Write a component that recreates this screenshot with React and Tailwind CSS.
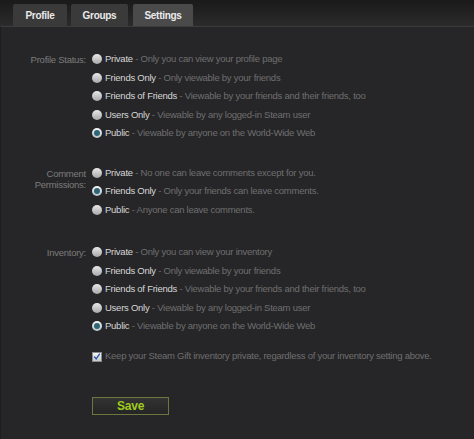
import React, { useState } from 'react';

const PRIVACY = [
    { key: 'private', label: 'Private', desc: 'Only you can view your profile page' },
    { key: 'friends', label: 'Friends Only', desc: 'Only viewable by your friends' },
    { key: 'fof', label: 'Friends of Friends', desc: 'Viewable by your friends and their friends, too' },
    { key: 'users', label: 'Users Only', desc: 'Viewable by any logged-in Steam user' },
    { key: 'public', label: 'Public', desc: 'Viewable by anyone on the World-Wide Web' },
];

const COMMENTS = [
    { key: 'private', label: 'Private', desc: 'No one can leave comments except for you.' },
    { key: 'friends', label: 'Friends Only', desc: 'Only your friends can leave comments.' },
    { key: 'public', label: 'Public', desc: 'Anyone can leave comments.' },
];

const INVENTORY = PRIVACY.map(o => o.key === 'private' ? { ...o, desc: 'Only you can view your inventory' } : o);

function Radio({ checked }) {
    return checked ? (
        <span className="w-[10px] h-[10px] rounded-full bg-gradient-to-b from-[#f4f4f4] to-[#b8c4c8] flex items-center justify-center shrink-0">
            <span className="w-[6px] h-[6px] rounded-full bg-[#2f6676]" />
        </span>
    ) : (
        <span className="w-[10px] h-[10px] rounded-full bg-gradient-to-b from-[#e8e8e8] to-[#a9a9a9] shrink-0" />
    );
}

function Group({ label, options, value, onChange }) {
    return (
        <div className="flex">
            <div className="w-[88px] pr-[3px] text-right text-[#7c7c7c] leading-[11px] pt-[4px]">{label}</div>
            <div className="flex flex-col">
                {options.map(o => (
                    <div key={o.key} onClick={() => onChange(o.key)} className="h-[18.5px] flex items-center gap-[3px] pl-[3px] cursor-pointer whitespace-nowrap">
                        <Radio checked={value === o.key} />
                        <span>
                            <span className="text-[#d6d6d6]">{o.label}</span>
                            <span className="text-[#6f6f6f]"> - {o.desc}</span>
                        </span>
                    </div>
                ))}
            </div>
        </div>
    );
}

export default function App() {
    const [profile, setProfile] = useState('public');
    const [comments, setComments] = useState('friends');
    const [inventory, setInventory] = useState('public');
    const [giftPrivate, setGiftPrivate] = useState(true);

    const tabs = ['Profile', 'Groups', 'Settings'];

    return (
        <div className="w-[474px] h-[439px] bg-[#262628] overflow-hidden text-[9.5px] tracking-[-0.25px]" style={{ fontFamily: '"Liberation Sans", Arial, sans-serif' }}>
            {/* tab strip */}
            <div className="h-[26px] bg-gradient-to-b from-[#1a1a1a] to-[#2b2b2b] flex items-end pl-[13px] gap-[4px]">
                {tabs.map(t => (
                    <div
                        key={t}
                        className={`h-[22px] flex items-center justify-center rounded-t-[2px] font-bold text-[10px] tracking-[-0.3px] text-[#eaeaea] ${t === 'Settings' ? 'bg-[#4a4a4a] w-[60px] ml-[1px]' : t === 'Groups' ? 'bg-[#3a3a3a] w-[57px]' : 'bg-[#3a3a3a] w-[54px]'}`}
                    >
                        {t}
                    </div>
                ))}
            </div>
            <div className="border-t border-[#3c3c3c] border-l border-l-[#1e1e1e] h-full pt-[23px]">
                <Group label="Profile Status:" options={PRIVACY} value={profile} onChange={setProfile} />
                <div className="h-[21px]" />
                <Group label={<>Comment<br />Permissions:</>} options={COMMENTS} value={comments} onChange={setComments} />
                <div className="h-[24px]" />
                <Group label="Inventory:" options={INVENTORY} value={inventory} onChange={setInventory} />
                <div className="h-[12px]" />
                <div className="pl-[91px] flex items-center gap-[3px] h-[18px] cursor-pointer whitespace-nowrap" onClick={() => setGiftPrivate(!giftPrivate)}>
                    <span className="w-[10px] h-[10px] bg-gradient-to-b from-[#f6f6f6] to-[#c8c8c8] border border-[#8a8a8a] flex items-center justify-center shrink-0">
                        {giftPrivate && (
                            <svg viewBox="0 0 10 10" className="w-[9px] h-[9px]">
                                <path d="M1.5 5 L4 8 L8.5 1.5" fill="none" stroke="#2c5aa8" strokeWidth="1.8" />
                            </svg>
                        )}
                    </span>
                    <span className="text-[#6f6f6f]">Keep your Steam Gift inventory private, regardless of your inventory setting above.</span>
                </div>
                <div className="pl-[91px] pt-[31px]">
                    <button className="w-[77px] h-[18px] border border-[#6a773f] bg-gradient-to-b from-[#333333] to-[#252525] text-[#9fcb1c] font-bold text-[12px] tracking-[-0.2px] leading-none flex items-center justify-center">
                        Save
                    </button>
                </div>
            </div>
        </div>
    );
}
